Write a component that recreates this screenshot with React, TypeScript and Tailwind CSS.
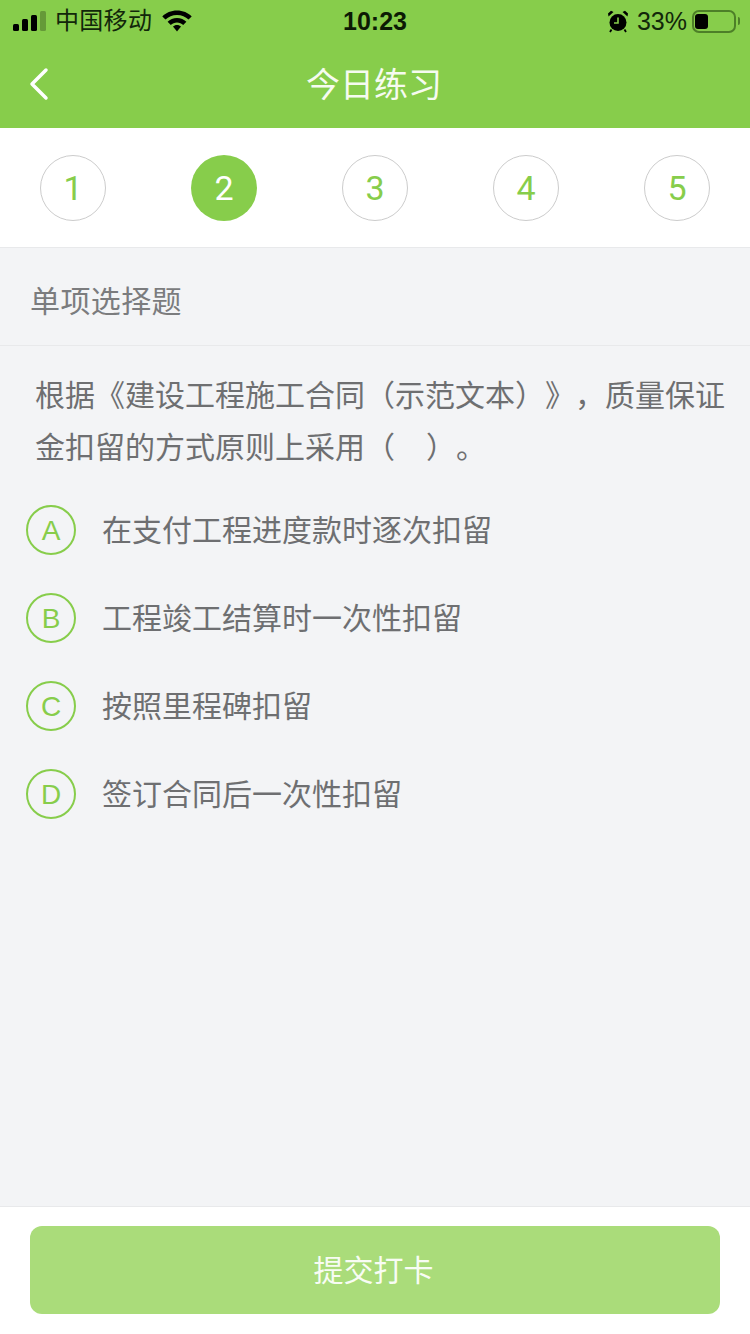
const cjk = 'font-["Liberation_Sans","Noto_Sans_CJK_SC",sans-serif]'

const steps = [1, 2, 3, 4, 5]
const options = [
  { key: 'A', text: '在支付工程进度款时逐次扣留' },
  { key: 'B', text: '工程竣工结算时一次性扣留' },
  { key: 'C', text: '按照里程碑扣留' },
  { key: 'D', text: '签订合同后一次性扣留' },
]

function StatusBar() {
  return (
    <div className="relative flex h-10 items-center pt-[2px] text-black">
      <div className="flex items-center pl-[13px]">
        <svg width="33" height="20" viewBox="0 0 33 20" fill="currentColor">
          <rect x="0" y="13" width="6" height="7" rx="1.5" />
          <rect x="9" y="8" width="6" height="12" rx="1.5" />
          <rect x="18" y="4" width="6" height="16" rx="1.5" />
          <rect x="27" y="0" width="6" height="20" rx="1.5" opacity="0.25" />
        </svg>
        <span className="ml-[9px] text-[24px] leading-8 tracking-[0.3px] text-[#12270a]">中国移动</span>
        <svg className="ml-[10px]" width="30" height="22" viewBox="0 0 30 22" fill="currentColor">
          <path d="M15 0.500C9 0.500 4 2.800 0.300 6.400l3.200 3.200C6.400 6.800 10.400 5 15 5s8.600 1.800 11.500 4.600l3.200-3.200C26 2.800 21 0.500 15 0.500z" />
          <path d="M15 8C11.300 8 8 9.400 5.600 11.700l3.200 3.200C10.400 13.400 12.600 12.500 15 12.500s4.600.900 6.200 2.400l3.200-3.200C22 9.400 18.700 8 15 8z" />
          <path d="M15 15c-1.600 0-3 .600-4 1.600l4 4.900 4-4.900c-1-1-2.400-1.600-4-1.600z" />
        </svg>
      </div>
      <span className="absolute left-0 right-0 text-center text-[25px] font-bold leading-8 text-[#0c1a04]">10:23</span>
      <div className="ml-auto flex items-center pr-[10px]">
        <svg width="22" height="23" viewBox="0 0 22 23" fill="currentColor">
          <circle cx="11" cy="12.500" r="8.500" />
          <path d="M1.500 6.500 6.500 2 4 .800 1 3.500zM20.500 6.500 15.500 2 18 .800 21 3.500z" />
          <path d="M4.500 19.500 3 22M17.500 19.500 19 22" stroke="currentColor" strokeWidth="1.800" />
          <path d="M11 7.500v5.500H7" fill="none" stroke="#87cd4b" strokeWidth="1.600" />
        </svg>
        <span className="ml-[8px] text-[25px] leading-8 text-[#12270a]">33%</span>
        <div className="ml-[5px] flex h-[23px] w-[44px] items-center rounded-[7px] border-2 border-[#4d7f28] pl-[1px]">
          <div className="h-[15px] w-[13px] rounded-[3px] bg-black" />
        </div>
        <div className="ml-[2px] h-2 w-[2px] rounded-r-sm bg-[#4d7f28]" />
      </div>
    </div>
  )
}

export default function App() {
  return (
    <div className={`flex h-[1334px] w-[750px] flex-col bg-[#f3f4f6] ${cjk} [text-spacing-trim:space-all]`}>
      <div className="h-32 bg-[#87cd4b]">
        <StatusBar />
        <div className="relative flex h-[88px] items-center justify-center pt-[2px] pr-[2px]">
          <svg className="absolute left-[28px] top-[27px]" width="22" height="34" viewBox="0 0 22 34" fill="none" stroke="white" strokeWidth="3.500" strokeLinecap="round" strokeLinejoin="round">
            <path d="M18 3 4 17l14 14" />
          </svg>
          <span className="text-[34px] leading-[44px] text-[#f6fbf0]">今日练习</span>
        </div>
      </div>

      <div className="flex h-[120px] items-start justify-between border-b border-[#e8e9eb] bg-white px-10 pt-[27px]">
        {steps.map((n) => (
          <div
            key={n}
            className={
              n === 2
                ? 'flex h-[66px] w-[66px] items-center justify-center rounded-full bg-[#87cd4b] font-["Roboto"] text-[34px] text-white'
                : 'flex h-[66px] w-[66px] items-center justify-center rounded-full border border-[#cccccc] font-["Roboto"] text-[34px] text-[#87cd4b]'
            }
          >
            {n}
          </div>
        ))}
      </div>

      <div className="flex h-[98px] items-center border-b border-[#e8e9eb] pl-[30px] pt-[10px] text-[30px] leading-10 tracking-[0.4px] text-[#7b7c7e]">
        单项选择题
      </div>

      <div className="pl-[35px] pr-[25px] pt-6 text-[30px] leading-[52px] text-[#6e6f71]">
        根据《建设工程施工合同（示范文本）》，质量保证金扣留的方式原则上采用（&nbsp;&nbsp;&nbsp;&thinsp;）。
      </div>

      <div className="mt-3 flex flex-col">
        {options.map((o) => (
          <div key={o.key} className="flex h-[88px] items-center pl-[26px]">
            <div className="flex h-[50px] w-[50px] items-center justify-center rounded-full border-2 border-[#87cd4b] pt-[2px] text-[28px] text-[#87cd4b]">
              {o.key}
            </div>
            <span className="ml-[26px] pt-px text-[30px] leading-10 text-[#6e6f71]">{o.text}</span>
          </div>
        ))}
      </div>

      <div className="mt-auto h-[128px] border-t border-[#e8e9eb] bg-white px-[30px] pt-[19px]">
        <button className="h-[88px] w-full rounded-xl bg-[#aadc7a] pr-[3px] text-[30px] text-[#f8fcf4]">提交打卡</button>
      </div>
    </div>
  )
}
